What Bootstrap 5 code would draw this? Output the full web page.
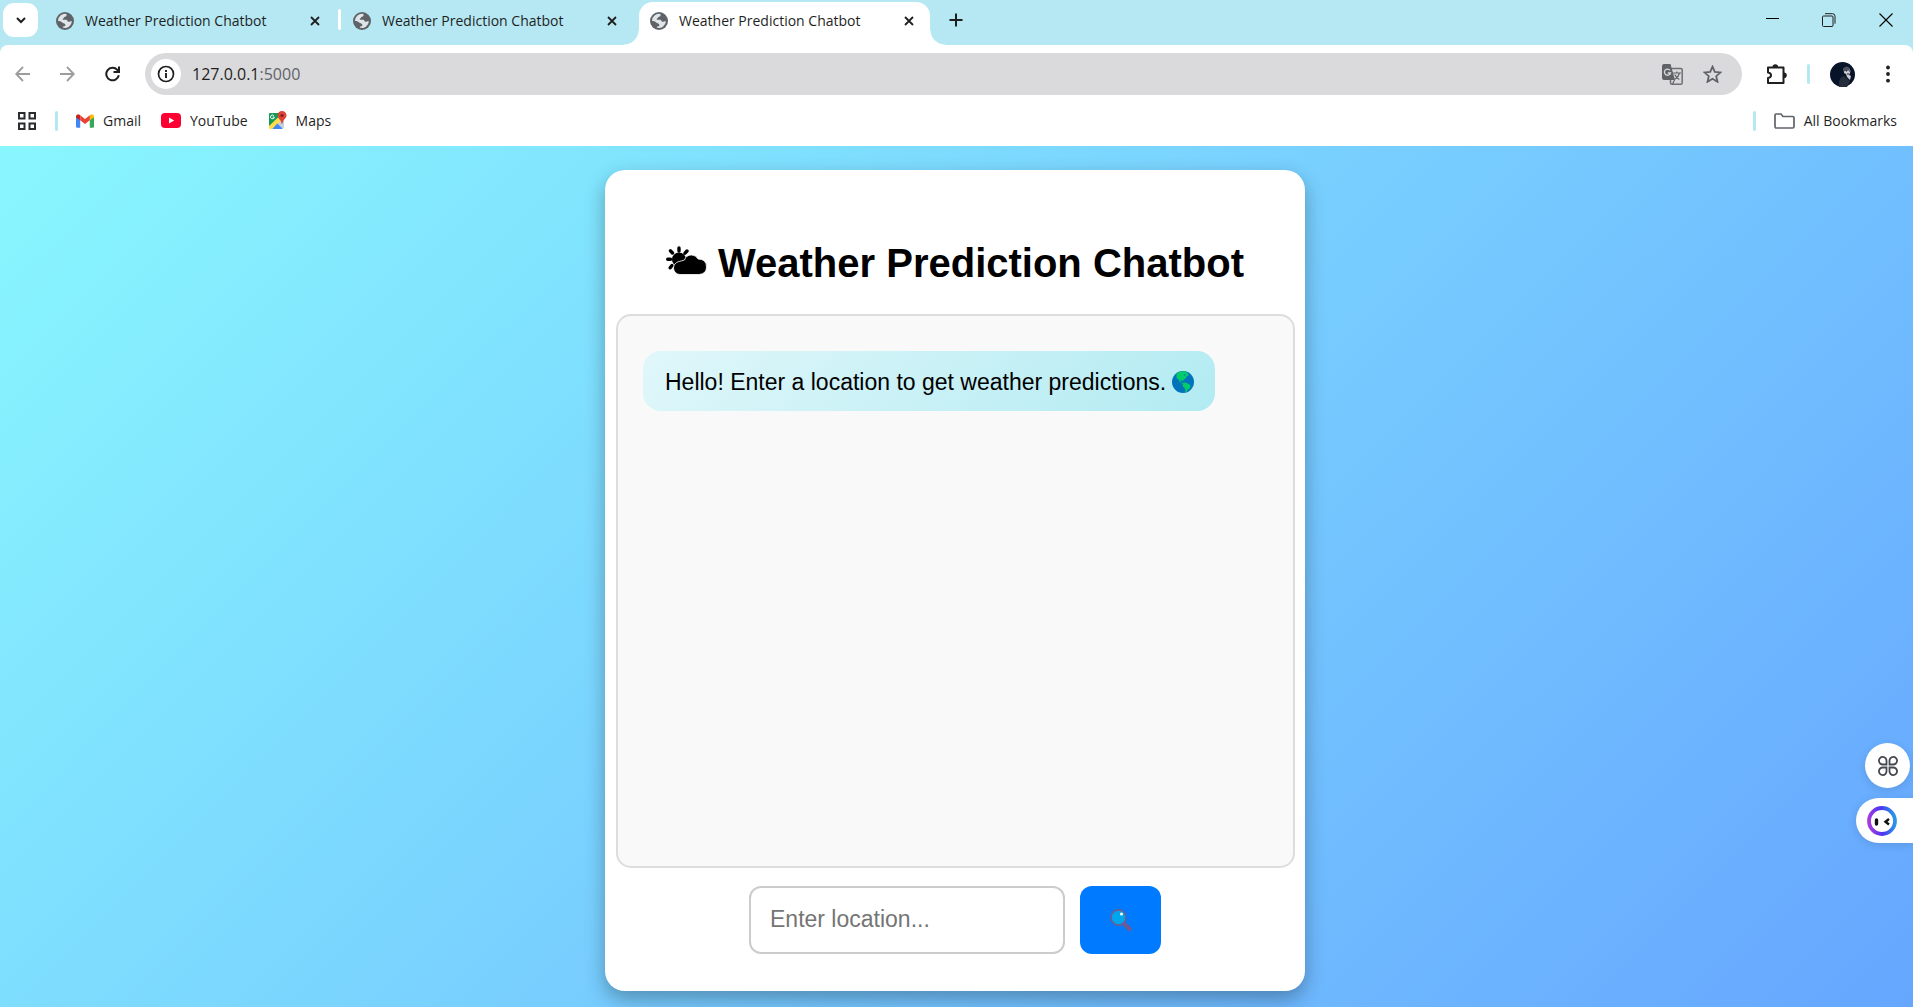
<!DOCTYPE html>
<html lang="en">
<head>
<meta charset="utf-8">
<meta name="viewport" content="width=device-width, initial-scale=1">
<title>Weather Prediction Chatbot</title>
<link rel="stylesheet" href="https://cdn.jsdelivr.net/npm/bootstrap@5.3.0/dist/css/bootstrap.min.css">
<style>
  body { background: #b5e8f3; font-family: "Liberation Sans", Arial, sans-serif; color: #000; }
  svg { display: block; flex: none; }
  .chrome-ui { font-family: "Open Sans", "Noto Sans", sans-serif; color: #1f1f1f; font-size: 14px; line-height: 20px; }
  .chrome-ui button, .side-tools button { border: 0; padding: 0; background: none; color: inherit; display: flex; align-items: center; justify-content: center; }
  .chrome-ui a { color: inherit; text-decoration: none; }
  .tab-strip { height: 45px; padding: 2px 0 0 3px; }
  .tab-strip .tab-search { width: 35px; height: 34px; margin: 1px 7px 0 0; border-radius: 11px; background: #fff; }
  .tab-item { width: 291px; height: 43px; padding: 0 16px 6px 11px; margin-right: 6px; position: relative; font-size: 14px; }
  .tab-item a { gap: 11px; }
  .tab-line::after { content: ""; position: absolute; right: -5px; top: 7px; width: 3px; height: 21px; border-radius: 2px; background: #fff; }
  .tab-current { background: #fff; border-radius: 14px 14px 0 0; }
  .tab-current::before, .tab-current::after { content: ""; position: absolute; bottom: 0; width: 15px; height: 15px; }
  .tab-current::before { left: -15px; background: radial-gradient(circle at 0 0, transparent 14px, #fff 15px); }
  .tab-current::after { right: -15px; background: radial-gradient(circle at 100% 0, transparent 14px, #fff 15px); }
  .chrome-ui .tab-new { margin: 11px 0 0 13px; }
  .win-keys { gap: 43px; padding: 0 20px 8px 0; }
  .top-panel { background: #fff; border-radius: 8px 8px 0 0; }
  .tool-row { padding: 8px 23px 0 15px; height: 50px; }
  .nav-keys { gap: 30px; margin-right: 25px; }
  .nav-keys button:disabled { color: #9c9c9c; }
  .address { height: 42px; background: #dadadc; border-radius: 21px; padding: 0 20px 0 6px; }
  .address .site-info { width: 30px; height: 30px; border-radius: 50%; background: #fff; margin-right: 11px; }
  .address-text { font-size: 16px; }
  .address-text span { color: #5f6368; }
  .short-line { width: 3px; height: 20px; border-radius: 2px; background: #b5e8f3; }
  .tool-row .short-line { margin: 0 20px; }
  .tool-row .menu-key { margin-left: 31px; }
  .mark-row { height: 51px; padding: 0 16px 0 18px; }
  .mark-row .short-line { margin: 0 18px 0 19px; }
  .mark-row a { display: flex; align-items: center; gap: 9px; }
  .weather-page { padding: 24px 3px 16px 0; background: linear-gradient(135deg, #89f7fe, #66a6ff); }
  .chat-card { width: 100%; max-width: 700px; padding: 69px 10px 37px; border-radius: 20px; background: #fff; box-shadow: 0 8px 20px rgba(0,0,0,.3); }
  .chat-title { font-size: 40px; line-height: 48px; gap: 11px; margin-bottom: 27px; }
  .chat-title svg { margin-bottom: 6px; }
  .chat-log { border: 2px solid #ddd; border-radius: 15px; background: #f9f9f9; padding: 35px 25px; margin-left: 1px; min-height: 300px; }
  .bot-bubble { border-radius: 18px; background: linear-gradient(135deg, #e0f7fa, #b2ebf2); padding: 17px 21px 15px 22px; gap: 6px; font-size: 23px; line-height: 28px; }
  .ask-form { gap: 15px; margin-top: 18px; }
  .ask-form input { width: 316px; height: 68px; padding: 0 19px 2px; border: 2px solid #ccc; border-radius: 12px; font-size: 23px; line-height: 32px; color: #000; }
  .ask-form input::placeholder { color: #757575; opacity: 1; }
  .ask-form button { width: 81px; height: 68px; border: 0; border-radius: 12px; background: #007bff; }
  .side-tools { position: fixed; right: 0; bottom: 164px; gap: 10px; }
  .side-tools button { background: #fff; height: 45px; box-shadow: 0 2px 10px rgba(0,0,0,.12); }
  .side-tools .round-key { width: 45px; border-radius: 50%; margin-right: 3px; }
  .side-tools .pill-key { width: 57px; border-radius: 23px 0 0 23px; padding-right: 5px; }
</style>
<script src="https://cdn.jsdelivr.net/npm/bootstrap@5.3.0/dist/js/bootstrap.bundle.min.js"></script>
</head>
<body class="min-vh-100 d-flex flex-column">

<svg width="0" height="0" class="position-absolute" aria-hidden="true">
  <symbol id="globe" viewBox="0 0 18 18">
    <circle cx="9" cy="9" r="9" fill="#5f6368"/>
    <path d="M10.300 2C11 3 10.500 4.600 9 4.800 8 5 8.200 6.200 7.200 6.400 6.500 6.600 6.500 7.600 7.200 7.700L10 7.800C11.500 8 11.400 9.600 12.400 9.800 13.600 10 13.800 9.200 15.900 9.300A7 7 0 0 1 6.700 15.600C6.800 14.500 7.500 14.300 8.600 14.200 9.700 14 9.400 12.500 8.900 12 8.200 11.200 7 11.300 6.200 10.500 5 9.300 3.500 9 2 9A7 7 0 0 1 10.300 2Z" fill="#dfe5e8"/>
  </symbol>
  <symbol id="cross" viewBox="0 0 10 10"><path d="M1 1l8 8M9 1l-8 8" stroke="#1f1f1f" stroke-width="1.800"/></symbol>
</svg>

<header class="chrome-ui">
  <nav class="tab-strip d-flex align-items-start" aria-label="Tabs">
    <button class="tab-search" aria-label="Search tabs"><svg width="10" height="7" viewBox="0 0 10 7"><path d="M1 1l4 4 4-4" fill="none" stroke="#1f1f1f" stroke-width="2"/></svg></button>
    <div class="tab-item tab-line d-flex align-items-center justify-content-between">
      <a href="#" class="d-flex align-items-center"><svg width="18" height="18"><use href="#globe"/></svg>Weather Prediction Chatbot</a>
      <button aria-label="Close tab"><svg width="10" height="10"><use href="#cross"/></svg></button>
    </div>
    <div class="tab-item d-flex align-items-center justify-content-between">
      <a href="#" class="d-flex align-items-center"><svg width="18" height="18"><use href="#globe"/></svg>Weather Prediction Chatbot</a>
      <button aria-label="Close tab"><svg width="10" height="10"><use href="#cross"/></svg></button>
    </div>
    <div class="tab-item tab-current d-flex align-items-center justify-content-between">
      <a href="#" class="d-flex align-items-center"><svg width="18" height="18"><use href="#globe"/></svg>Weather Prediction Chatbot</a>
      <button aria-label="Close tab"><svg width="10" height="10"><use href="#cross"/></svg></button>
    </div>
    <button class="tab-new" aria-label="New tab"><svg width="14" height="14" viewBox="0 0 14 14"><path d="M7 .5v13M.5 7h13" stroke="#1f1f1f" stroke-width="2"/></svg></button>
    <div class="win-keys ms-auto d-flex align-items-center align-self-stretch">
      <button aria-label="Minimize"><svg width="13" height="13" viewBox="0 0 13 13"><path d="M0 5.500h13" stroke="#000"/></svg></button>
      <button aria-label="Restore"><svg width="14" height="14" viewBox="0 0 14 14" fill="none" stroke="#1f1f1f"><rect x=".5" y="3" width="10.500" height="10.500" rx="1"/><path d="M3 .7h7.500q2.500 0 2.500 2.500v7.500"/></svg></button>
      <button aria-label="Close window"><svg width="14" height="14" viewBox="0 0 14 14"><path d="M.5.5l13 13M13.500.5l-13 13" stroke="#000" stroke-width="1.100"/></svg></button>
    </div>
  </nav>

  <div class="top-panel">
    <div class="tool-row d-flex align-items-center">
      <div class="nav-keys d-flex">
        <button disabled aria-label="Back"><svg width="15" height="16" viewBox="0 0 15 16" fill="none" stroke="currentColor" stroke-width="1.800"><path d="M15 8H1.500M8 1L1.200 8 8 15"/></svg></button>
        <button disabled aria-label="Forward"><svg width="15" height="16" viewBox="0 0 15 16" fill="none" stroke="currentColor" stroke-width="1.800"><path d="M0 8h13.500M7 1l6.800 7L7 15"/></svg></button>
        <button aria-label="Reload"><svg width="15" height="16" viewBox="0 0 15 16" fill="none" stroke="#1f1f1f" stroke-width="2"><path d="M13.800 9.200A6.300 6.300 0 1 1 12.300 3.800L14 5.600M14 .5V6H8.500"/></svg></button>
      </div>
      <div class="address d-flex align-items-center flex-grow-1">
        <button class="site-info" aria-label="Site information"><svg width="18" height="18" viewBox="0 0 18 18"><circle cx="9" cy="9" r="7.500" fill="none" stroke="#1f1f1f" stroke-width="1.700"/><path d="M9 8v5M9 5v1.900" stroke="#1f1f1f" stroke-width="1.900"/></svg></button>
        <a href="#" class="address-text">127.0.0.1<span>:5000</span></a>
        <button class="ms-auto" aria-label="Translate"><svg width="21" height="21" viewBox="0 0 21 21"><rect x="8.500" y="4.500" width="11.700" height="15.700" rx="1.500" fill="none" stroke="#6d6f73" stroke-width="1.500"/><path d="M2 0h6.500l4.500 16H2a2 2 0 0 1-2-2V2a2 2 0 0 1 2-2z" fill="#5f6368"/><path d="M8 6.300A3.100 3.100 0 1 0 8.500 9H5.800" fill="none" stroke="#dadadc" stroke-width="1.300"/><path d="M11 9h8M14.800 7.500V9M17.500 9c-.6 2.600-2.500 4.800-4.500 6.200M12.800 10.500c.8 2 2.600 4 4.500 5M10.500 20l2-4" fill="none" stroke="#5f6368" stroke-width="1.200"/></svg></button>
        <button class="ms-3 ps-1" aria-label="Bookmark this page"><svg width="19" height="18" viewBox="0 0 19 18"><path d="M9.500 1.700l2.300 5.200 5.700.5-4.300 3.800 1.300 5.600-5-3-5 3 1.300-5.600L1.500 7.400l5.700-.5z" fill="none" stroke="#5f6368" stroke-width="1.800"/></svg></button>
      </div>
      <button class="ms-4" aria-label="Extensions"><svg width="21" height="21" viewBox="0 0 21 21"><path d="M2 3.500h15.500V19H2v-5c4-.4 4-5 0-5.500z" fill="none" stroke="#1f1f1f" stroke-width="2" stroke-linejoin="round"/><path d="M6.500 3a2.800 2.800 0 0 1 5.600 0zM18 8.500a2.800 2.800 0 0 1 0 5.600z" fill="#1f1f1f"/></svg></button>
      <div class="short-line"></div>
      <button aria-label="Profile"><svg width="25" height="25" viewBox="0 0 25 25"><circle cx="12.500" cy="12.500" r="12.500" fill="#071329"/><path d="M9 25c-.5-7 1-10 5-11l6 5-3 6z" fill="#252d3b"/><path d="M14 8.500c0-2 2-3 4-2.500 2 .5 3 3 2 5l-1 2 2 1-1 4-3-3-1-3-2-1z" fill="#cfccd0"/><path d="M13 6.500q4-4 7 0l-1 2-6 1z" fill="#4a505d"/><path d="M16 9h1M19 9h1M17 12h2" stroke="#18202f"/></svg></button>
      <button class="menu-key" aria-label="Menu"><svg width="4" height="18" viewBox="0 0 4 18" fill="#1f1f1f"><circle cx="2" cy="2.500" r="1.900"/><circle cx="2" cy="9" r="1.900"/><circle cx="2" cy="15.700" r="1.900"/></svg></button>
    </div>

    <nav class="mark-row d-flex align-items-center" aria-label="Bookmarks">
      <button aria-label="Apps"><svg width="18" height="18" viewBox="0 0 18 18" fill="none" stroke="#2b2c2e" stroke-width="2"><path d="M1 1h5.500v5.500H1zM11.500 1H17v5.500h-5.500zM1 11.500h5.500V17H1zM11.500 11.500H17V17h-5.500z"/></svg></button>
      <div class="short-line"></div>
      <a href="#"><svg width="18" height="14" viewBox="0 0 18 14"><path d="M0 2.500V12.500q0 1.300 1.300 1.300H4.200V5.500z" fill="#4285f4"/><path d="M13.800 5.500v8.300h2.900q1.300 0 1.300-1.300V2.500z" fill="#34a853"/><path d="M0 2.500C0 .3 2 0 3.500.8L4.200 1.300v5L0 3.500z" fill="#c5221f"/><path d="M18 2.500C18 .3 16 0 14.500.8l-.7.5v5L18 3.500z" fill="#fbbc04"/><path d="M4.200 1.300L9 4.900l4.800-3.600v5L9 9.900 4.200 6.300z" fill="#ea4335"/></svg>Gmail</a>
      <a href="#" class="ms-3 ps-1"><svg width="20" height="15" viewBox="0 0 20 15"><rect width="20" height="15" rx="4" fill="#ff0033"/><path d="M8 4.500l5.200 3L8 10.500z" fill="#fff"/></svg>YouTube</a>
      <a href="#" class="ms-3 ps-1"><svg width="19" height="19" viewBox="0 0 19 19"><path d="M2 2h14v15H2z" fill="#c5d2dc"/><path d="M1 3q0-1 1-1h9l3 6-12 9-1-1z" fill="#159a58"/><path d="M1 15L11 5.500l3 3L4.500 18H2q-1 0-1-1z" fill="#ffdc48"/><path d="M4.300 18l5-5.500L15 18z" fill="#4285f4"/><path d="M5.800 4.600A1.900 1.900 0 1 0 6.300 6H4.700" fill="none" stroke="#fff"/><path d="M14 0a4.500 4.500 0 0 1 4.500 4.500c0 3-3.700 4-4.200 8.500h-.6C13.200 8.500 9.500 7.500 9.500 4.500A4.500 4.500 0 0 1 14 0z" fill="#dc4437"/><circle cx="14" cy="4.500" r="1.600" fill="#7b231e"/></svg>Maps</a>
      <div class="short-line ms-auto"></div>
      <a href="#"><svg width="21" height="16" viewBox="0 0 21 16"><path d="M1 13V2.300Q1 1 2.300 1H7l2 2.500h9.700Q20 3.500 20 4.800V13.500Q20 15 18.700 15H2.300Q1 15 1 13z" fill="none" stroke="#5f6368" stroke-width="1.700"/></svg>All Bookmarks</a>
    </nav>
  </div>
</header>

<main class="weather-page flex-grow-1 d-flex justify-content-center">
  <section class="chat-card d-flex flex-column">
    <h1 class="chat-title d-flex align-items-center justify-content-center fw-bold mt-0">
      <svg width="41" height="29" viewBox="0 0 41 29"><g stroke="#000" stroke-width="3.400" stroke-linecap="round"><path d="M13 2v3M4.500 4.800L6.500 7M21 5l-2 2.200M1.700 13.300H4.500M4.200 21.800l1.800-2.300"/></g><circle cx="13" cy="13.500" r="7"/><path d="M14 28.500a6.500 6.500 0 0 1-6.500-6.500q.2-5 5.500-6.500 3-.7 5.500-1.500 1.500-5 7-5 4.500 0 6.500 4 8.500 0 8.500 8 0 7-7.500 7.500z" stroke="#fff" stroke-width=".8"/></svg>
      <span>Weather Prediction Chatbot</span>
    </h1>
    <div class="chat-log flex-grow-1 d-flex align-items-start">
      <div class="bot-bubble d-inline-flex align-items-center">
        <span>Hello! Enter a location to get weather predictions.</span>
        <svg width="22" height="22" viewBox="0 0 22 22"><circle cx="11" cy="11" r="11" fill="#0074ba"/><path d="M4.500 2.700Q8-.5 14 .5l1.500 1.500L17 4.500l-2 .5-1 2-2 1.500-1 1.500-2-1-.5 1.500 2 1.500 3-.5 4 2 1 2-1 2-2 1.500-1 2.500-1-.5-.5-3.500-2.500-2.500.5-2-3-2L6.500 8.500 4.500 7z" fill="#00cc6a"/><path d="M11.500 3l2.500.8-1.500 1.200z" fill="#0074ba"/></svg>
      </div>
    </div>
    <form class="ask-form d-flex justify-content-center">
      <input type="text" placeholder="Enter location..." aria-label="Location">
      <button type="button" class="d-flex align-items-center justify-content-center" aria-label="Search"><svg width="22" height="22" viewBox="0 0 22 22"><path d="M14.500 15l5 5" stroke="#6b5c95" stroke-width="4.500" stroke-linecap="round"/><circle cx="8.500" cy="8.500" r="7.600" fill="#00a6ed" stroke="#6b5c95" stroke-width="1.600"/><circle cx="11.500" cy="5" r="1.500" fill="#fff"/></svg></button>
    </form>
  </section>
</main>

<aside class="side-tools d-flex flex-column align-items-end" aria-label="Extension shortcuts">
  <button class="round-key" aria-label="Open tools"><svg width="20" height="20" viewBox="0 0 20 20" fill="none" stroke="#46484f" stroke-width="1.800"><path d="M8.500 8.500H5A3.800 3.800 0 1 1 8.500 5zM11.500 8.500V5A3.800 3.800 0 1 1 15 8.500zM8.500 11.500V15A3.800 3.800 0 1 1 5 11.500zM11.500 11.500H15A3.800 3.800 0 1 1 11.500 15z"/></svg></button>
  <button class="pill-key" aria-label="Open assistant"><svg width="30" height="30" viewBox="0 0 30 30"><defs><linearGradient id="ring" x1="0" y1=".7" x2="1" y2=".6"><stop stop-color="#a63be0"/><stop offset=".5" stop-color="#4c35f0"/><stop offset="1" stop-color="#2896e8"/></linearGradient></defs><circle cx="15" cy="15" r="13" fill="none" stroke="url(#ring)" stroke-width="3.800"/><path d="M9.500 14v4" stroke="#111" stroke-width="3.400" stroke-linecap="round"/><path d="M22 13l-3.500 2.700L22 18.500" fill="none" stroke="#111" stroke-width="2.400"/></svg></button>
</aside>
</body>
</html>
